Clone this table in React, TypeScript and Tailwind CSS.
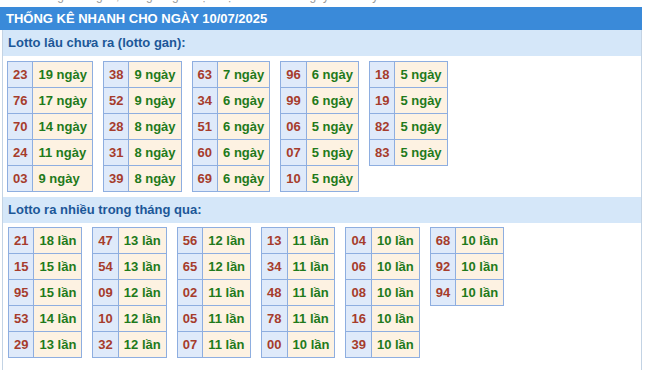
const GAN: [string, string][][] = [
  [['23', '19'], ['76', '17'], ['70', '14'], ['24', '11'], ['03', '9']],
  [['38', '9'], ['52', '9'], ['28', '8'], ['31', '8'], ['39', '8']],
  [['63', '7'], ['34', '6'], ['51', '6'], ['60', '6'], ['69', '6']],
  [['96', '6'], ['99', '6'], ['06', '5'], ['07', '5'], ['10', '5']],
  [['18', '5'], ['19', '5'], ['82', '5'], ['83', '5']],
];

const NHIEU: [string, string][][] = [
  [['21', '18'], ['15', '15'], ['95', '15'], ['53', '14'], ['29', '13']],
  [['47', '13'], ['54', '13'], ['09', '12'], ['10', '12'], ['32', '12']],
  [['56', '12'], ['65', '12'], ['02', '11'], ['05', '11'], ['07', '11']],
  [['13', '11'], ['34', '11'], ['48', '11'], ['78', '11'], ['00', '10']],
  [['04', '10'], ['06', '10'], ['08', '10'], ['16', '10'], ['39', '10']],
  [['68', '10'], ['92', '10'], ['94', '10']],
];

function LottoTable({ rows, unit }: { rows: [string, string][]; unit: string }) {
  return (
    <table className="border-collapse border border-[#8eaee0] self-start">
      <tbody>
        {rows.map(([num, count]) => (
          <tr key={num} className="h-[26px]">
            <td className="border border-[#8eaee0] bg-[#dfeafa] px-[5px] text-[#a63c2c] text-[13px] font-bold">
              {num}
            </td>
            <td className="border border-[#8eaee0] bg-[#fdf2e2] px-[5px] text-[#1f7a1b] text-[13px] font-bold whitespace-nowrap">
              {count} {unit}
            </td>
          </tr>
        ))}
      </tbody>
    </table>
  );
}

function SectionTitle({ children }: { children: React.ReactNode }) {
  return (
    <div className="h-[26px] bg-[#d5e7f9] pl-[5px] flex items-center text-[13px] font-bold text-[#1c5798]">
      {children}
    </div>
  );
}

export default function App() {
  return (
    <div className="w-[651px] h-[374px] bg-white overflow-hidden font-['Liberation_Sans',Arial,sans-serif]">
      {/* tail of the previous line, mostly scrolled away */}
      <div className="h-[7px] overflow-hidden">
        <div className="-mt-[11px] pl-[6px] text-[12px] leading-[14px] text-[#999]">
          Xem thống kê lô gan, thống kê giải đặc biệt nhanh nhất ngày hôm nay
        </div>
      </div>

      <div className="w-[642px]">
        <div className="h-[23px] bg-[#3a8ad9] pl-[6px] flex items-center text-[13px] font-bold text-white">
          THỐNG KÊ NHANH CHO NGÀY 10/07/2025
        </div>

        <div className="ml-[2px] border-l border-r border-[#c3d3e4] h-[340px]">
          <SectionTitle>Lotto lâu chưa ra (lotto gan):</SectionTitle>
          <div className="flex gap-[10px] pl-[4px] pt-[5px] pb-[5px]">
            {GAN.map((rows, i) => (
              <LottoTable key={i} rows={rows} unit="ngày" />
            ))}
          </div>

          <SectionTitle>Lotto ra nhiều trong tháng qua:</SectionTitle>
          <div className="flex gap-[10px] pl-[5px] pt-[4px]">
            {NHIEU.map((rows, i) => (
              <LottoTable key={i} rows={rows} unit="lần" />
            ))}
          </div>
        </div>
      </div>
    </div>
  );
}
